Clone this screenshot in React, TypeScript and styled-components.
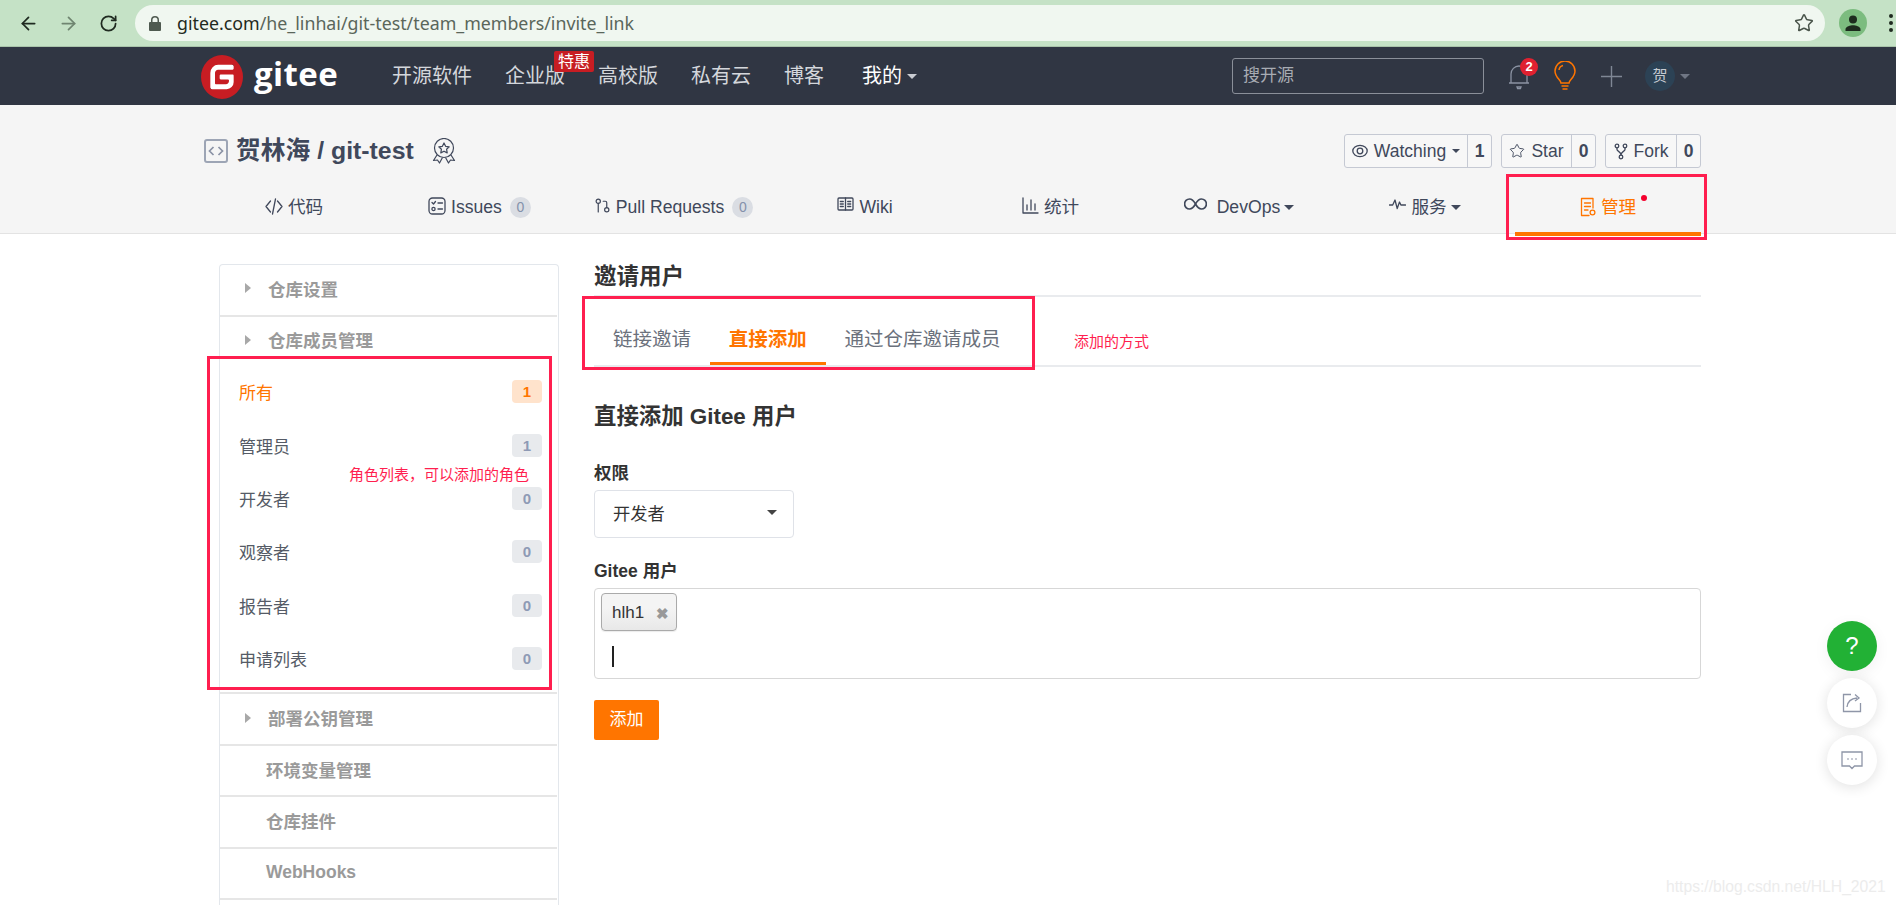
import React from 'react';
import styled, { createGlobalStyle } from 'styled-components';
import { ArrowLeft, ArrowRight, RotateCw, Star, GitPullRequest } from 'lucide-react';

const SANS = '"Liberation Sans", "Noto Sans CJK SC", sans-serif';
const ORANGE = '#ff7500';
const MARK = '#ff1f4f';

const GlobalStyle = createGlobalStyle`
  html, body {
    margin: 0;
    padding: 0;
    background: #fff;
    font-family: ${SANS};
    overflow: hidden;
  }
  * { box-sizing: border-box; }
`;

const Page = styled.div`
  position: relative;
  width: 1896px;
  height: 905px;
  overflow: hidden;
  color: #40485b;
`;

/* browser chrome */
const BrowserBar = styled.div`
  height: 47px;
  background: #c5e2c6;
  border-bottom: 1px solid #a9c4aa;
  display: flex;
  align-items: center;
  padding-left: 8px;
`;

const BrowserButton = styled.div<{ $dim?: boolean }>`
  width: 40px;
  height: 40px;
  display: flex;
  align-items: center;
  justify-content: center;
  color: ${(p) => (p.$dim ? '#6f8570' : '#1f2a20')};
`;

const AddressPill = styled.div`
  width: 1690px;
  height: 36px;
  margin-left: 7px;
  background: #f0f7f0;
  border-radius: 18px;
  display: flex;
  align-items: center;
  padding: 0 11px 0 14px;
  font-family: "Noto Sans", sans-serif;
  font-size: 17.8px;
  color: #5a665b;
`;

const LockIcon = styled.svg`
  width: 12px;
  height: 15px;
  margin-right: 16px;
  flex: none;
`;

const Host = styled.span`
  color: #1f2a20;
`;

const AddressStar = styled(Star)`
  margin-left: auto;
  color: #4a554b;
`;

const ProfileDot = styled.div`
  width: 28px;
  height: 28px;
  margin-left: 14px;
  border-radius: 50%;
  background: #7cbc7f;
  display: flex;
  align-items: center;
  justify-content: center;
`;

const MenuDots = styled.div`
  margin-left: 22px;
  display: flex;
  flex-direction: column;
  gap: 3px;
  span {
    width: 4px;
    height: 4px;
    border-radius: 50%;
    background: #1f2a20;
  }
`;

/* site nav */
const SiteNav = styled.div`
  height: 58px;
  background: #303643;
  display: flex;
  align-items: center;
  padding: 0 206px 0 201px;
`;

const Logo = styled.div`
  display: flex;
  align-items: center;
  width: 191px;
  gap: 11px;
  margin-top: 2px;
`;

const LogoText = styled.span`
  font-family: "Open Sans", sans-serif;
  font-weight: 700;
  font-size: 33px;
  letter-spacing: 0.4px;
  line-height: 44px;
  color: #fff;
  margin-top: -6px;
`;

const NavLinks = styled.div`
  display: flex;
  align-items: center;
  gap: 33px;
`;

const NavLink = styled.div<{ $strong?: boolean }>`
  position: relative;
  font-size: 20px;
  line-height: 30px;
  margin-left: ${(p) => (p.$strong ? '5px' : '0')};
  color: ${(p) => (p.$strong ? '#fff' : '#d4d7dc')};
  display: flex;
  align-items: center;
  gap: 5px;
`;

const PromoBadge = styled.span`
  position: absolute;
  top: -10px;
  right: -29px;
  width: 40px;
  height: 21px;
  border-radius: 2px;
  background: #c71d23;
  color: #fff;
  font-size: 16px;
  line-height: 21px;
  text-align: center;
`;

const Caret = styled.span<{ $color?: string; $size?: number }>`
  display: inline-block;
  flex: none;
  width: 0;
  height: 0;
  border-left: ${(p) => p.$size ?? 5}px solid transparent;
  border-right: ${(p) => p.$size ?? 5}px solid transparent;
  border-top: ${(p) => p.$size ?? 5}px solid ${(p) => p.$color ?? '#40485b'};
`;

const SearchBox = styled.div`
  width: 252px;
  height: 36px;
  margin-left: auto;
  border: 1px solid #8a8f99;
  border-radius: 3px;
  padding-left: 10px;
  font-size: 17px;
  line-height: 34px;
  color: #a8acb3;
`;

const NavTools = styled.div`
  display: flex;
  align-items: center;
  margin-left: 24px;
`;

const BellWrap = styled.div`
  position: relative;
  width: 22px;
  height: 30px;
  margin-right: 24px;
`;

const BellCount = styled.span`
  position: absolute;
  top: -3px;
  left: 12px;
  width: 18px;
  height: 18px;
  border-radius: 50%;
  background: #e02130;
  color: #fff;
  font-size: 13px;
  font-weight: 700;
  line-height: 18px;
  text-align: center;
`;

const PlusIcon = styled.svg`
  margin-left: 25px;
`;

const UserBubble = styled.div`
  width: 30px;
  height: 30px;
  margin-left: 23px;
  margin-right: 5px;
  border-radius: 50%;
  background: #2c4255;
  color: #c6cbd2;
  font-size: 15px;
  line-height: 30px;
  text-align: center;
`;

/* repo header */
const RepoHead = styled.div`
  height: 129px;
  background: #f5f5f5;
  border-bottom: 1px solid #e3e3e3;
  padding: 29px 195px 0 204px;
`;

const RepoRow = styled.div`
  display: flex;
  align-items: center;
  height: 34px;
`;

const RepoTitle = styled.h1`
  margin: 0 0 0 8px;
  font-size: 24.8px;
  line-height: 34px;
  font-weight: 700;
  color: #40485b;
`;

const AwardWrap = styled.span`
  margin-left: 18px;
  display: flex;
`;

const RepoActions = styled.div`
  margin-left: auto;
  display: flex;
  gap: 9px;
`;

const ActionButton = styled.div`
  display: flex;
  height: 34px;
  border: 1px solid #c5c9d3;
  border-radius: 3px;
  font-size: 17.5px;
  line-height: 32px;
  background: #f7f7f7;
`;

const ActionMain = styled.div<{ $w: number }>`
  width: ${(p) => p.$w}px;
  display: flex;
  align-items: center;
  justify-content: center;
  gap: 6px;
`;

const ActionCount = styled.div`
  width: 24px;
  border-left: 1px solid #c5c9d3;
  font-weight: 700;
  text-align: center;
`;

const RepoTabs = styled.div`
  display: grid;
  grid-template-columns: 180px 191px 197px 186px 185px 192px 180px 186px;
  margin-top: 20px;
  height: 48px;
`;

const RepoTab = styled.div<{ $active?: boolean }>`
  position: relative;
  height: 48px;
  display: flex;
  align-items: flex-start;
  justify-content: center;
  gap: 5px;
  padding-top: 7px;
  font-size: 17.6px;
  line-height: 24px;
  color: ${(p) => (p.$active ? ORANGE : '#40485b')};
  border-bottom: ${(p) => (p.$active ? `4px solid ${ORANGE}` : '0')};
  svg { margin-top: 2px; flex: none; }
`;

const TabCount = styled.span`
  width: 21px;
  height: 21px;
  margin: 2px 0 0 3px;
  border-radius: 50%;
  background: #dadde3;
  color: #8491ab;
  font-size: 14px;
  line-height: 21px;
  text-align: center;
`;

const TabDot = styled.span`
  position: absolute;
  top: 7px;
  left: 126px;
  width: 6px;
  height: 6px;
  border-radius: 50%;
  background: #f5002d;
`;

const TabCaret = styled(Caret)`
  margin-top: 10px;
  margin-left: -1px;
`;

/* content */
const Content = styled.div`
  display: flex;
  align-items: flex-start;
  padding: 30px 195px 0 219px;
  gap: 35px;
`;

const SideMenu = styled.div`
  width: 340px;
  min-height: 700px;
  flex: none;
  border: 1px solid #e3e7ec;
  border-bottom: 0;
  border-radius: 4px 4px 0 0;
`;

const MenuHead = styled.div<{ $plain?: boolean; $noRule?: boolean }>`
  height: ${(p) => (p.$noRule ? '49.5px' : '51.5px')};
  margin-right: 1px;
  display: flex;
  align-items: center;
  padding: 0 0 3px ${(p) => (p.$plain ? '46px' : '25px')};
  gap: 17px;
  font-size: 17.5px;
  font-weight: 700;
  color: #9a9a9a;
  border-bottom: ${(p) => (p.$noRule ? '0' : '2px solid #e6e6e6')};
`;

const MenuArrow = styled.span`
  width: 0;
  height: 0;
  border-top: 5px solid transparent;
  border-bottom: 5px solid transparent;
  border-left: 6px solid #a8a8a8;
`;

const RoleList = styled.div`
  margin-right: 1px;
  padding-bottom: 6px;
  border-bottom: 2px solid #e6e6e6;
`;

const RoleRow = styled.div<{ $active?: boolean }>`
  height: 53.4px;
  display: flex;
  align-items: center;
  justify-content: space-between;
  padding: 0 15px 2px 19px;
  font-size: 17px;
  color: ${(p) => (p.$active ? ORANGE : '#555b66')};
`;

const RoleCount = styled.span<{ $active?: boolean }>`
  width: 30px;
  height: 23px;
  border-radius: 4px;
  background: ${(p) => (p.$active ? '#ffe3cc' : '#e8eaed')};
  color: ${(p) => (p.$active ? ORANGE : '#8e9ab5')};
  font-size: 15px;
  font-weight: 700;
  line-height: 23px;
  text-align: center;
`;

const Main = styled.div`
  width: 1107px;
  flex: none;
`;

const Heading = styled.h2`
  margin: 0;
  height: 31px;
  font-size: 22.5px;
  line-height: 26px;
  font-weight: 700;
  color: #333;
`;

const HeadingRule = styled.div`
  height: 2px;
  background: #e9ebee;
`;

const InviteTabs = styled.div`
  display: flex;
  height: 70px;
  padding-top: 24px;
  border-bottom: 2px solid #e9ebee;
`;

const InviteTab = styled.div<{ $active?: boolean }>`
  height: 44px;
  padding: 3px 19px 0;
  margin-right: -0.3px;
  font-size: 19.5px;
  line-height: 30px;
  font-weight: ${(p) => (p.$active ? 700 : 400)};
  color: ${(p) => (p.$active ? ORANGE : '#6b717c')};
  border-bottom: ${(p) => (p.$active ? `3px solid ${ORANGE}` : '0')};
`;

const SubHeading = styled.h3`
  margin: 35px 0 0;
  font-size: 22.4px;
  line-height: 30px;
  font-weight: 700;
  color: #333;
`;

const FieldLabel = styled.div<{ $gap: number }>`
  margin-top: ${(p) => p.$gap}px;
  margin-bottom: 5px;
  font-size: 17.5px;
  line-height: 24px;
  font-weight: 700;
  color: #333;
`;

const SelectBox = styled.div`
  width: 200px;
  height: 48px;
  display: flex;
  align-items: center;
  justify-content: space-between;
  padding: 0 16px 4px 18px;
  border: 1px solid #dfe2e8;
  border-radius: 4px;
  font-size: 17.3px;
  color: #333;
`;

const TagInput = styled.div`
  height: 91px;
  padding: 4px 6px;
  border: 1px solid #d7d7d7;
  border-radius: 4px;
`;

const UserTag = styled.div`
  width: 76px;
  height: 38px;
  display: flex;
  align-items: center;
  gap: 12px;
  padding: 2px 0 0 10px;
  border: 1px solid #aaa;
  border-radius: 4px;
  background: linear-gradient(#f4f4f4 40%, #e8e8e8);
  box-shadow: 0 1px 1px rgba(0, 0, 0, 0.08);
  font-size: 17px;
  color: #333;
`;

const TagClose = styled.span`
  font-size: 15px;
  font-weight: 700;
  line-height: 15px;
  color: #999;
`;

const TextCursor = styled.div`
  width: 2px;
  height: 21px;
  margin: 15px 0 0 11px;
  background: #222;
`;

const SubmitButton = styled.div`
  width: 65px;
  height: 40px;
  margin-top: 21px;
  border-radius: 2px;
  background: ${ORANGE};
  color: #fff;
  font-size: 17px;
  line-height: 40px;
  text-align: center;
`;

/* floating buttons */
const FloatStack = styled.div`
  position: absolute;
  left: 1827px;
  top: 621px;
  display: flex;
  flex-direction: column;
  gap: 7px;
`;

const FloatButton = styled.div<{ $green?: boolean }>`
  width: 50px;
  height: 50px;
  display: flex;
  align-items: center;
  justify-content: center;
  border-radius: 50%;
  background: ${(p) => (p.$green ? '#22b135' : '#fff')};
  color: #fff;
  font-size: 24px;
  box-shadow: ${(p) => (p.$green ? '0 4px 16px rgba(0,0,0,.06)' : '0 2px 14px rgba(0,0,0,.12)')};
`;

const Watermark = styled.div`
  position: absolute;
  left: 1666px;
  top: 876px;
  font-size: 15.7px;
  line-height: 22px;
  color: #ececec;
  white-space: nowrap;
`;

/* annotations drawn on the screenshot */
const MarkBox = styled.div`
  position: absolute;
  border: 3px solid ${MARK};
  pointer-events: none;
`;

const ManageMark = styled(MarkBox)`
  left: 1506px;
  top: 174px;
  width: 201px;
  height: 66px;
`;

const RoleMark = styled(MarkBox)`
  left: 207px;
  top: 356px;
  width: 345px;
  height: 334px;
`;

const TabsMark = styled(MarkBox)`
  left: 582px;
  top: 296px;
  width: 453px;
  height: 74px;
`;

const MarkNote = styled.div`
  position: absolute;
  font-size: 15px;
  line-height: 20px;
  color: ${MARK};
  white-space: nowrap;
`;

const RoleNote = styled(MarkNote)`
  left: 349px;
  top: 465px;
`;

const TabsNote = styled(MarkNote)`
  left: 1074px;
  top: 332px;
`;

const line = { fill: 'none', stroke: 'currentColor', strokeWidth: 1.3, strokeLinecap: 'round', strokeLinejoin: 'round' } as const;

const CodeIcon = () => (
  <svg width="18" height="18" viewBox="0 0 18 18" {...line}>
    <path d="M5.5 4 1 9.5 5.5 15M12.5 4 17 9.5 12.5 15M10.5 2 7.5 17" />
  </svg>
);

const IssuesIcon = () => (
  <svg width="18" height="18" viewBox="0 0 18 18" {...line}>
    <rect x="1" y="1" width="16" height="16" rx="3.5" />
    <path d="M4 5.5 5.5 7 7.5 4.5M10 6h4.5M10 12h4.5" />
    <circle cx="5.5" cy="12" r="1.6" />
  </svg>
);

const BookIcon = () => (
  <svg width="17" height="14" viewBox="0 0 17 14" {...line}>
    <rect x="1" y="1" width="15" height="12" rx="1" />
    <path d="M8.5 1v12M3.3 4.5h3M3.3 7h3M3.3 9.5h3M10.7 4.5h3M10.7 7h3M10.7 9.5h3" />
  </svg>
);

const ChartIcon = () => (
  <svg width="17" height="17" viewBox="0 0 17 17" {...line}>
    <path d="M1 1v15h15M5 8v5M9 3v10M13 7v6" />
  </svg>
);

const LoopIcon = () => (
  <svg width="23" height="14" viewBox="0 0 23 14" fill="none" stroke="currentColor" strokeWidth="1.7">
    <path d="M11.5 7C9.5 3.5 8 2 5.6 2a5 5 0 0 0 0 10c2.4 0 3.9-1.5 5.9-5s3.5-5 5.9-5a5 5 0 0 1 0 10c-2.4 0-3.9-1.5-5.9-5Z" />
  </svg>
);

const PulseIcon = () => (
  <svg width="17" height="14" viewBox="0 0 17 14" {...line}>
    <path d="M0.5 8h3.2L6 3l2.2 8.5L10.5 5l1.4 3H16.5" />
  </svg>
);

const ManageIcon = () => (
  <svg width="16" height="20" viewBox="0 0 16 20" {...line}>
    <path d="M9 18.5H1.5V1.5h11.5V11M4.5 6h6M4.5 9.5h6M4.5 13H8" />
    <circle cx="12.5" cy="15.5" r="2.4" />
  </svg>
);

const EyeIcon = () => (
  <svg width="16" height="14" viewBox="0 0 16 14" fill="none" stroke="currentColor" strokeWidth="1.3">
    <ellipse cx="8" cy="7" rx="7.2" ry="5.6" />
    <circle cx="8" cy="7" r="2.8" />
  </svg>
);

const ForkIcon = () => (
  <svg width="14" height="17" viewBox="0 0 14 17" {...line}>
    <circle cx="3" cy="3" r="1.8" />
    <circle cx="11" cy="3" r="1.8" />
    <circle cx="7" cy="14" r="1.8" />
    <path d="M3 5v1.5c0 2 4 2 4 5.5 0-3.5 4-3.5 4-5.5V5" />
  </svg>
);

const RepoIcon = () => (
  <svg width="24" height="24" viewBox="0 0 24 24" fill="none">
    <rect x="1" y="1" width="22" height="22" rx="2" stroke="#9da5b5" strokeWidth="2" />
    <path d="M9.5 8 5.5 12l4 4M14.5 8l4 4-4 4" stroke="#8a92a5" strokeWidth="1.7" />
  </svg>
);

const AwardIcon = () => (
  <svg width="24" height="26" viewBox="0 0 24 26" fill="none" stroke="#40485b" strokeWidth="1.2" strokeLinejoin="round">
    <circle cx="12" cy="10" r="9.5" />
    <path d="m12 5 1.6 3.3 3.6.5-2.6 2.5.6 3.6-3.2-1.700-3.200 1.700.6-3.600-2.600-2.500 3.600-.5Z" />
    <path d="M5 17 1.5 22.5l4-.5L7.5 25l3-5.500M19 17l3.500 5.500-4-.5-2 3-3-5.500" />
  </svg>
);

const GiteeMark = () => (
  <svg width="42" height="44" viewBox="0 0 24 24" preserveAspectRatio="none">
    <circle cx="12" cy="12" r="9" fill="#fff" />
    <path
      fill="#c71d23"
      d="M11.984 0A12 12 0 0 0 0 12a12 12 0 0 0 12 12 12 12 0 0 0 12-12A12 12 0 0 0 12 0a12 12 0 0 0-.016 0zm6.09 5.333c.328 0 .593.266.592.593v1.482a.594.594 0 0 1-.593.592H9.777c-.982 0-1.778.796-1.778 1.778v5.63c0 .327.266.592.593.592h5.63c.982 0 1.778-.796 1.778-1.778v-.296a.593.593 0 0 0-.592-.593h-4.15a.592.592 0 0 1-.592-.592v-1.482a.593.593 0 0 1 .593-.592h6.815c.327 0 .593.265.593.592v3.408a4 4 0 0 1-4 4H5.926a.593.593 0 0 1-.593-.593V9.778a4.444 4.444 0 0 1 4.445-4.444h8.296Z"
    />
  </svg>
);

const roles = [
  { name: '所有', count: 1, active: true },
  { name: '管理员', count: 1 },
  { name: '开发者', count: 0 },
  { name: '观察者', count: 0 },
  { name: '报告者', count: 0 },
  { name: '申请列表', count: 0 },
];

export default function App() {
  return (
    <Page>
      <GlobalStyle />

      <BrowserBar>
        <BrowserButton><ArrowLeft size={21} strokeWidth={2} /></BrowserButton>
        <BrowserButton $dim><ArrowRight size={21} strokeWidth={2} /></BrowserButton>
        <BrowserButton><RotateCw size={19} strokeWidth={2.2} /></BrowserButton>
        <AddressPill>
          <LockIcon viewBox="0 0 12 15">
            <path fill="#4f5a50" d="M1 6h1V4a4 4 0 0 1 8 0v2h1a1 1 0 0 1 1 1v7a1 1 0 0 1-1 1H1a1 1 0 0 1-1-1V7a1 1 0 0 1 1-1Zm2.5 0h5V4a2.5 2.5 0 0 0-5 0Z" />
          </LockIcon>
          <Host>gitee.com</Host>/he_linhai/git-test/team_members/invite_link
          <AddressStar size={20} strokeWidth={1.8} />
        </AddressPill>
        <ProfileDot>
          <svg width="18" height="18" viewBox="0 0 18 18" fill="#1d2b1e">
            <circle cx="9" cy="5.5" r="4" />
            <path d="M1.5 17v-2c0-2.5 5-3.8 7.5-3.8s7.5 1.3 7.5 3.8v2Z" />
          </svg>
        </ProfileDot>
        <MenuDots><span /><span /><span /></MenuDots>
      </BrowserBar>

      <SiteNav>
        <Logo>
          <GiteeMark />
          <LogoText>gitee</LogoText>
        </Logo>
        <NavLinks>
          <NavLink>开源软件</NavLink>
          <NavLink>企业版<PromoBadge>特惠</PromoBadge></NavLink>
          <NavLink>高校版</NavLink>
          <NavLink>私有云</NavLink>
          <NavLink>博客</NavLink>
          <NavLink $strong>我的<Caret $color="#c9ccd2" /></NavLink>
        </NavLinks>
        <SearchBox>搜开源</SearchBox>
        <NavTools>
          <BellWrap>
            <svg width="22" height="30" viewBox="0 0 22 30" fill="none" stroke="#8b93a3" strokeWidth="1.3">
              <path d="M1 22h20M3 22V13a8 8 0 0 1 16 0v9M9 26h4l-.6 1.6H9.6Z" />
            </svg>
            <BellCount>2</BellCount>
          </BellWrap>
          <svg width="22" height="30" viewBox="0 0 22 30" fill="none" stroke={ORANGE} strokeWidth="1.5">
            <path d="M7 22c0-3-6-5.5-6-12a10 10 0 0 1 20 0c0 6.5-6 9-6 12Z" />
            <path d="M5 9c.3-2.5 1.8-4 4-4.5M7.5 25h7M8.5 28h5" />
          </svg>
          <PlusIcon width="21" height="21" viewBox="0 0 21 21" stroke="#7f8795" strokeWidth="1.4">
            <path d="M0 10.5h21M10.5 0v21" />
          </PlusIcon>
          <UserBubble>贺</UserBubble>
          <Caret $color="#6f7684" />
        </NavTools>
      </SiteNav>

      <RepoHead>
        <RepoRow>
          <RepoIcon />
          <RepoTitle>贺林海 / git-test</RepoTitle>
          <AwardWrap><AwardIcon /></AwardWrap>
          <RepoActions>
            <ActionButton>
              <ActionMain $w={122}><EyeIcon />Watching<Caret $size={4} /></ActionMain>
              <ActionCount>1</ActionCount>
            </ActionButton>
            <ActionButton>
              <ActionMain $w={69}><Star size={16} strokeWidth={1.4} />Star</ActionMain>
              <ActionCount>0</ActionCount>
            </ActionButton>
            <ActionButton>
              <ActionMain $w={70}><ForkIcon />Fork</ActionMain>
              <ActionCount>0</ActionCount>
            </ActionButton>
          </RepoActions>
        </RepoRow>
        <RepoTabs>
          <RepoTab><CodeIcon />代码</RepoTab>
          <RepoTab><IssuesIcon />Issues<TabCount>0</TabCount></RepoTab>
          <RepoTab><GitPullRequest size={17} strokeWidth={1.7} />Pull Requests<TabCount>0</TabCount></RepoTab>
          <RepoTab><BookIcon />Wiki</RepoTab>
          <RepoTab><ChartIcon />统计</RepoTab>
          <RepoTab><LoopIcon />&nbsp;DevOps<TabCaret /></RepoTab>
          <RepoTab><PulseIcon />服务<TabCaret /></RepoTab>
          <RepoTab $active><ManageIcon />管理<TabDot /></RepoTab>
        </RepoTabs>
      </RepoHead>

      <Content>
        <SideMenu>
          <MenuHead><MenuArrow />仓库设置</MenuHead>
          <MenuHead $noRule><MenuArrow />仓库成员管理</MenuHead>
          <RoleList>
            {roles.map((r) => (
              <RoleRow key={r.name} $active={r.active}>
                {r.name}
                <RoleCount $active={r.active}>{r.count}</RoleCount>
              </RoleRow>
            ))}
          </RoleList>
          <MenuHead><MenuArrow />部署公钥管理</MenuHead>
          <MenuHead $plain>环境变量管理</MenuHead>
          <MenuHead $plain>仓库挂件</MenuHead>
          <MenuHead $plain>WebHooks</MenuHead>
        </SideMenu>

        <Main>
          <Heading>邀请用户</Heading>
          <HeadingRule />
          <InviteTabs>
            <InviteTab>链接邀请</InviteTab>
            <InviteTab $active>直接添加</InviteTab>
            <InviteTab>通过仓库邀请成员</InviteTab>
          </InviteTabs>
          <SubHeading>直接添加 Gitee 用户</SubHeading>
          <FieldLabel $gap={29}>权限</FieldLabel>
          <SelectBox>开发者<Caret $size={5} $color="#444" /></SelectBox>
          <FieldLabel $gap={21}>Gitee 用户</FieldLabel>
          <TagInput>
            <UserTag>hlh1<TagClose>✖</TagClose></UserTag>
            <TextCursor />
          </TagInput>
          <SubmitButton>添加</SubmitButton>
        </Main>
      </Content>

      <FloatStack>
        <FloatButton $green>?</FloatButton>
        <FloatButton>
          <svg width="20" height="20" viewBox="0 0 20 20" fill="none" stroke="#8f96a8" strokeWidth="1.3">
            <path d="M9 1.5H1.5v17h17V10" />
            <path d="M5 14c.5-5 4-8.5 10-9M13 1.5 17 5l-4 3" />
          </svg>
        </FloatButton>
        <FloatButton>
          <svg width="22" height="19" viewBox="0 0 22 19" fill="none" stroke="#8f96a8" strokeWidth="1.3">
            <path d="M1 1h20v14h-7.5L11 17.5 8.5 15H1Z" />
            <path d="M6.5 8h1M10.500 8h1M14.500 8h1" strokeWidth="1.8" />
          </svg>
        </FloatButton>
      </FloatStack>

      <Watermark>https://blog.csdn.net/HLH_2021</Watermark>

      <ManageMark />
      <RoleMark />
      <TabsMark />
      <RoleNote>角色列表，可以添加的角色</RoleNote>
      <TabsNote>添加的方式</TabsNote>
    </Page>
  );
}
